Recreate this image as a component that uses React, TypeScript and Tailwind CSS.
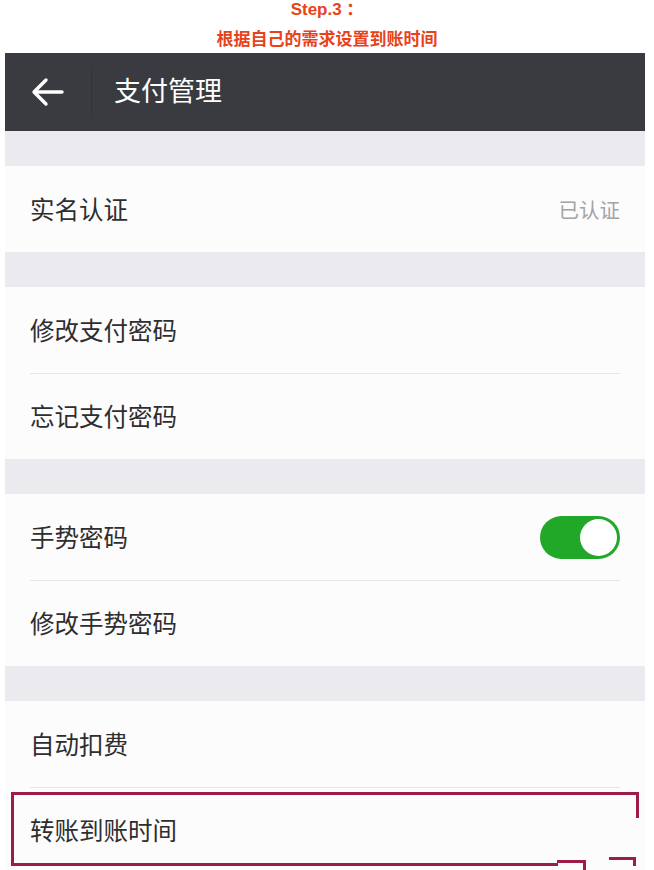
import React from "react";

const font = { fontFamily: '"Noto Sans CJK SC", "Noto Sans", sans-serif' };

function Row({ label, right, divider, children }: { label: string; right?: string; divider?: boolean; children?: React.ReactNode }) {
  return (
    <div className="h-[86px] bg-[#fdfcfd] px-[25px] flex flex-col">
      <div className={divider ? "h-px bg-[#e6e5e8]" : "h-px"} />
      <div className="flex-1 flex items-center">
        <span className="text-[24.5px] leading-none text-[#2e2e2e] flex-1">{label}</span>
        {right && <span className="text-[20.5px] leading-none text-[#a3a3a5]">{right}</span>}
        {children}
      </div>
    </div>
  );
}

function Gap() {
  return <div className="h-[35px] bg-[#ebeaee]" />;
}

export default function App() {
  return (
    <div className="w-[654px] h-[870px] bg-white overflow-hidden relative" style={font}>
      <div className="h-[53px] flex flex-col items-center">
        <div className="text-[17px] leading-[20px] font-bold text-[#e8421a]" style={{ fontFamily: '"Liberation Sans", "Noto Sans CJK SC", sans-serif' }}>Step.3 ：</div>
        <div className="mt-[7px] text-[17px] leading-[22px] font-bold text-[#e8421a]">根据自己的需求设置到账时间</div>
      </div>
      <div className="ml-[5px] w-[640px]">
        <div className="h-[78px] bg-[#3a3b40] flex items-center">
          <div className="w-[86px] flex justify-center">
            <svg width="34" height="30" viewBox="0 0 34 30" fill="none" stroke="white" strokeWidth="3.4" strokeLinecap="round" strokeLinejoin="round">
              <path d="M31 15H4" />
              <path d="M15 3L3 15l12 12" />
            </svg>
          </div>
          <div className="w-px h-[46px] bg-[#333438]" />
          <span className="ml-[22px] pb-[6px] text-[27px] leading-none text-white">支付管理</span>
        </div>
        <Gap />
        <Row label="实名认证" right="已认证" />
        <Gap />
        <Row label="修改支付密码" />
        <Row label="忘记支付密码" divider />
        <Gap />
        <Row label="手势密码">
          <div className="w-[80px] h-[43px] rounded-full bg-[#22a829] flex items-center justify-end pr-[3px]">
            <div className="w-[37px] h-[37px] rounded-full bg-white" />
          </div>
        </Row>
        <Row label="修改手势密码" divider />
        <Gap />
        <Row label="自动扣费" />
        <Row label="转账到账时间" divider />
      </div>
      {/* highlight box overlay */}
      <div className="absolute left-[11px] top-[792px] w-[628px] h-[3px] bg-[#9e1c4a]" />
      <div className="absolute left-[11px] top-[792px] w-[3px] h-[74px] bg-[#9e1c4a]" />
      <div className="absolute left-[636px] top-[792px] w-[3px] h-[26px] bg-[#9e1c4a]" />
      <div className="absolute left-[11px] top-[863px] w-[547px] h-[3px] bg-[#9e1c4a]" />
      <div className="absolute left-[557px] top-[860px] w-[29px] h-[3px] bg-[#9e1c4a]" />
      <div className="absolute left-[583px] top-[860px] w-[3px] h-[10px] bg-[#9e1c4a]" />
      <div className="absolute left-[609px] top-[857px] w-[27px] h-[3px] bg-[#9e1c4a]" />
      <div className="absolute left-[633px] top-[857px] w-[3px] h-[9px] bg-[#9e1c4a]" />
    </div>
  );
}
